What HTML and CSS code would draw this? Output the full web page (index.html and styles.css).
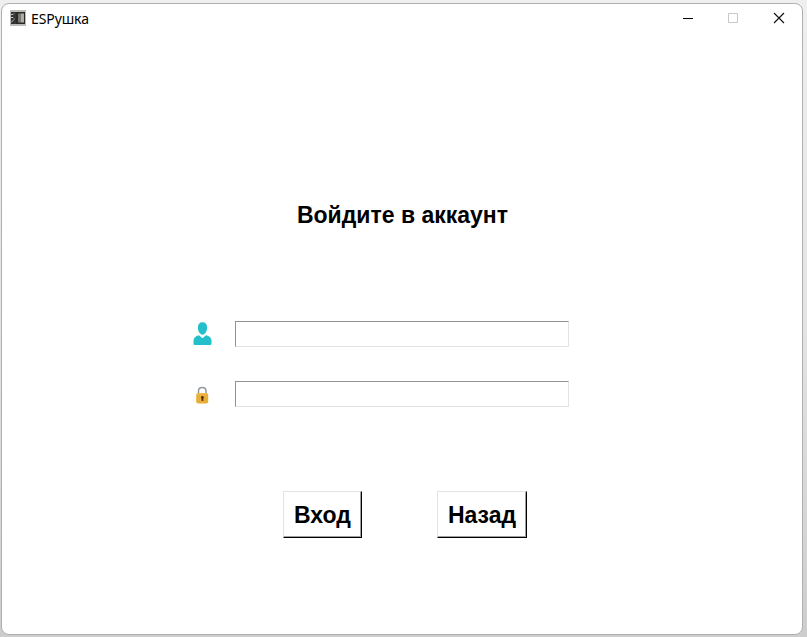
FILE: index.html
```html
<!DOCTYPE html>
<html lang="ru">
<head>
<meta charset="utf-8">
<title>ESPушка</title>
<link rel="stylesheet" href="styles.css">
</head>
<body>
<main class="window">
  <header class="titlebar">
    <svg class="app-icon" width="16" height="16" viewBox="0 0 16 16">
      <path fill="#bcbbb8" d="M0 0h16v16H0z"/>
      <path fill="#333" d="M1 2h6v12H1z"/>
      <path stroke="#c0c0be" fill="none" d="M1 4.500h2l1-1M0 7.500h3l1 1M1 12.500l3-3"/>
      <path fill="#2a2a2a" d="M6 2h9v12H6z"/>
      <path fill="#77756f" d="M8 3.500h2.500v9H8z"/>
      <path fill="#b1ada5" d="M10.500 3.500h3.500v9h-3.500z"/>
    </svg>
    <span class="app-name">ESPушка</span>
    <div class="controls">
      <svg width="12" height="12" viewBox="0 0 12 12"><path d="M1 6.500h10" stroke="#000"/></svg>
      <svg width="12" height="12" viewBox="0 0 12 12"><path d="M1.500 1.500h9v9h-9z" fill="none" stroke="#c8c8c8"/></svg>
      <svg class="close" width="12" height="12" viewBox="0 0 12 12"><path d="M1 1l10 10M11 1L1 11" stroke="#111" stroke-width="1.15"/></svg>
    </div>
  </header>
  <h1 class="heading">Войдите в аккаунт</h1>
  <form class="login">
    <label class="field">
      <svg width="20" height="26" viewBox="0 0 20 26" fill="#23bfcb">
        <path d="M9.500 1.200c3 0 4.600 2 4.600 5.200 0 2.600-1 5-2.500 6.400-1.300 1.400-2.900 1.400-4.200 0C5.900 11.400 4.900 9 4.900 6.400c0-3.200 1.600-5.200 4.600-5.200z"/>
        <path d="M6 14.200l3.500 3.100 3.500-3.100c3.500 1 5.500 2.500 5.500 5.500v2.700c0 1-.7 1.600-1.700 1.600H2.200c-1 0-1.700-.6-1.700-1.600v-2.700c0-3 2-4.500 5.500-5.500z"/>
      </svg>
      <input class="entry" type="text" aria-label="Логин">
    </label>
    <label class="field">
      <svg width="20" height="26" viewBox="0 0 20 26">
        <path d="M5.500 13v-3C5.500 5.200 13 5.200 13 10v3" fill="none" stroke="#93989c" stroke-width="1.500"/>
        <rect x="3.200" y="12" width="12" height="10.600" rx="2" fill="#e9ae37"/>
        <path d="M4.300 13h9.800" stroke="#f4c963" stroke-width=".8"/>
        <path d="M9.300 15a1.500 1.500 0 0 1 .9 2.700l.3 2H8.500l.1-2A1.500 1.500 0 0 1 9.300 15z" fill="#4b2d0c"/>
      </svg>
      <input class="entry" type="password" aria-label="Пароль">
    </label>
    <div class="actions">
      <button class="btn btn-enter" type="button">Вход</button>
      <button class="btn btn-back" type="button">Назад</button>
    </div>
  </form>
</main>
</body>
</html>
```
FILE: styles.css
```css
* {
  box-sizing: border-box;
}

body {
  margin: 0;
  height: 637px;
  padding: 3px 4px 2px 1px;
  overflow: hidden;
  background: linear-gradient(#efefef, #e4e4e4 50%, #cdcdcd);
  color: #000;
  font-family: "Liberation Sans", Arial, sans-serif;
}

.window {
  height: 632px;
  border: 1px solid #b0b0b0;
  border-radius: 8px;
  background: #fff;
}

.titlebar {
  display: flex;
  align-items: center;
  height: 30px;
  padding: 0 17px 0 8px;
}

.app-icon {
  margin-top: -2px;
}

.app-name {
  margin-left: 5px;
  font: 14px/20px "Noto Sans", sans-serif;
  letter-spacing: -0.1px;
}

.controls {
  display: flex;
  gap: 33px;
  margin: -2px 0 0 auto;
}

.close {
  margin-left: 1px;
}

.heading {
  margin: 167px 0 0;
  padding-left: 1px;
  font-size: 23px;
  line-height: 28px;
  text-align: center;
}

.login {
  margin: 92px 0 0 191px;
}

.field {
  display: flex;
  gap: 22px;
  height: 26px;
  margin-bottom: 34px;
}

.entry {
  width: 334px;
  height: 26px;
  padding: 2px 4px;
  border: 1px solid;
  border-color: #929292 #e3e3e3 #e3e3e3 #929292;
  border-radius: 0;
  outline: none;
  font-size: 18px;
}

.actions {
  display: flex;
  gap: 75px;
  margin: 84px 0 0 90px;
}

.btn {
  height: 47px;
  padding: 1px 0 0;
  border: 1px solid;
  border-color: #e3e3e3 #000 #000 #e3e3e3;
  border-radius: 0;
  background: #fff;
  box-shadow: inset -1px -1px #a0a0a0;
  color: #000;
  font: bold 23px/28px "Liberation Sans", Arial, sans-serif;
}

.btn-enter {
  width: 79px;
}

.btn-back {
  width: 90px;
}
```
